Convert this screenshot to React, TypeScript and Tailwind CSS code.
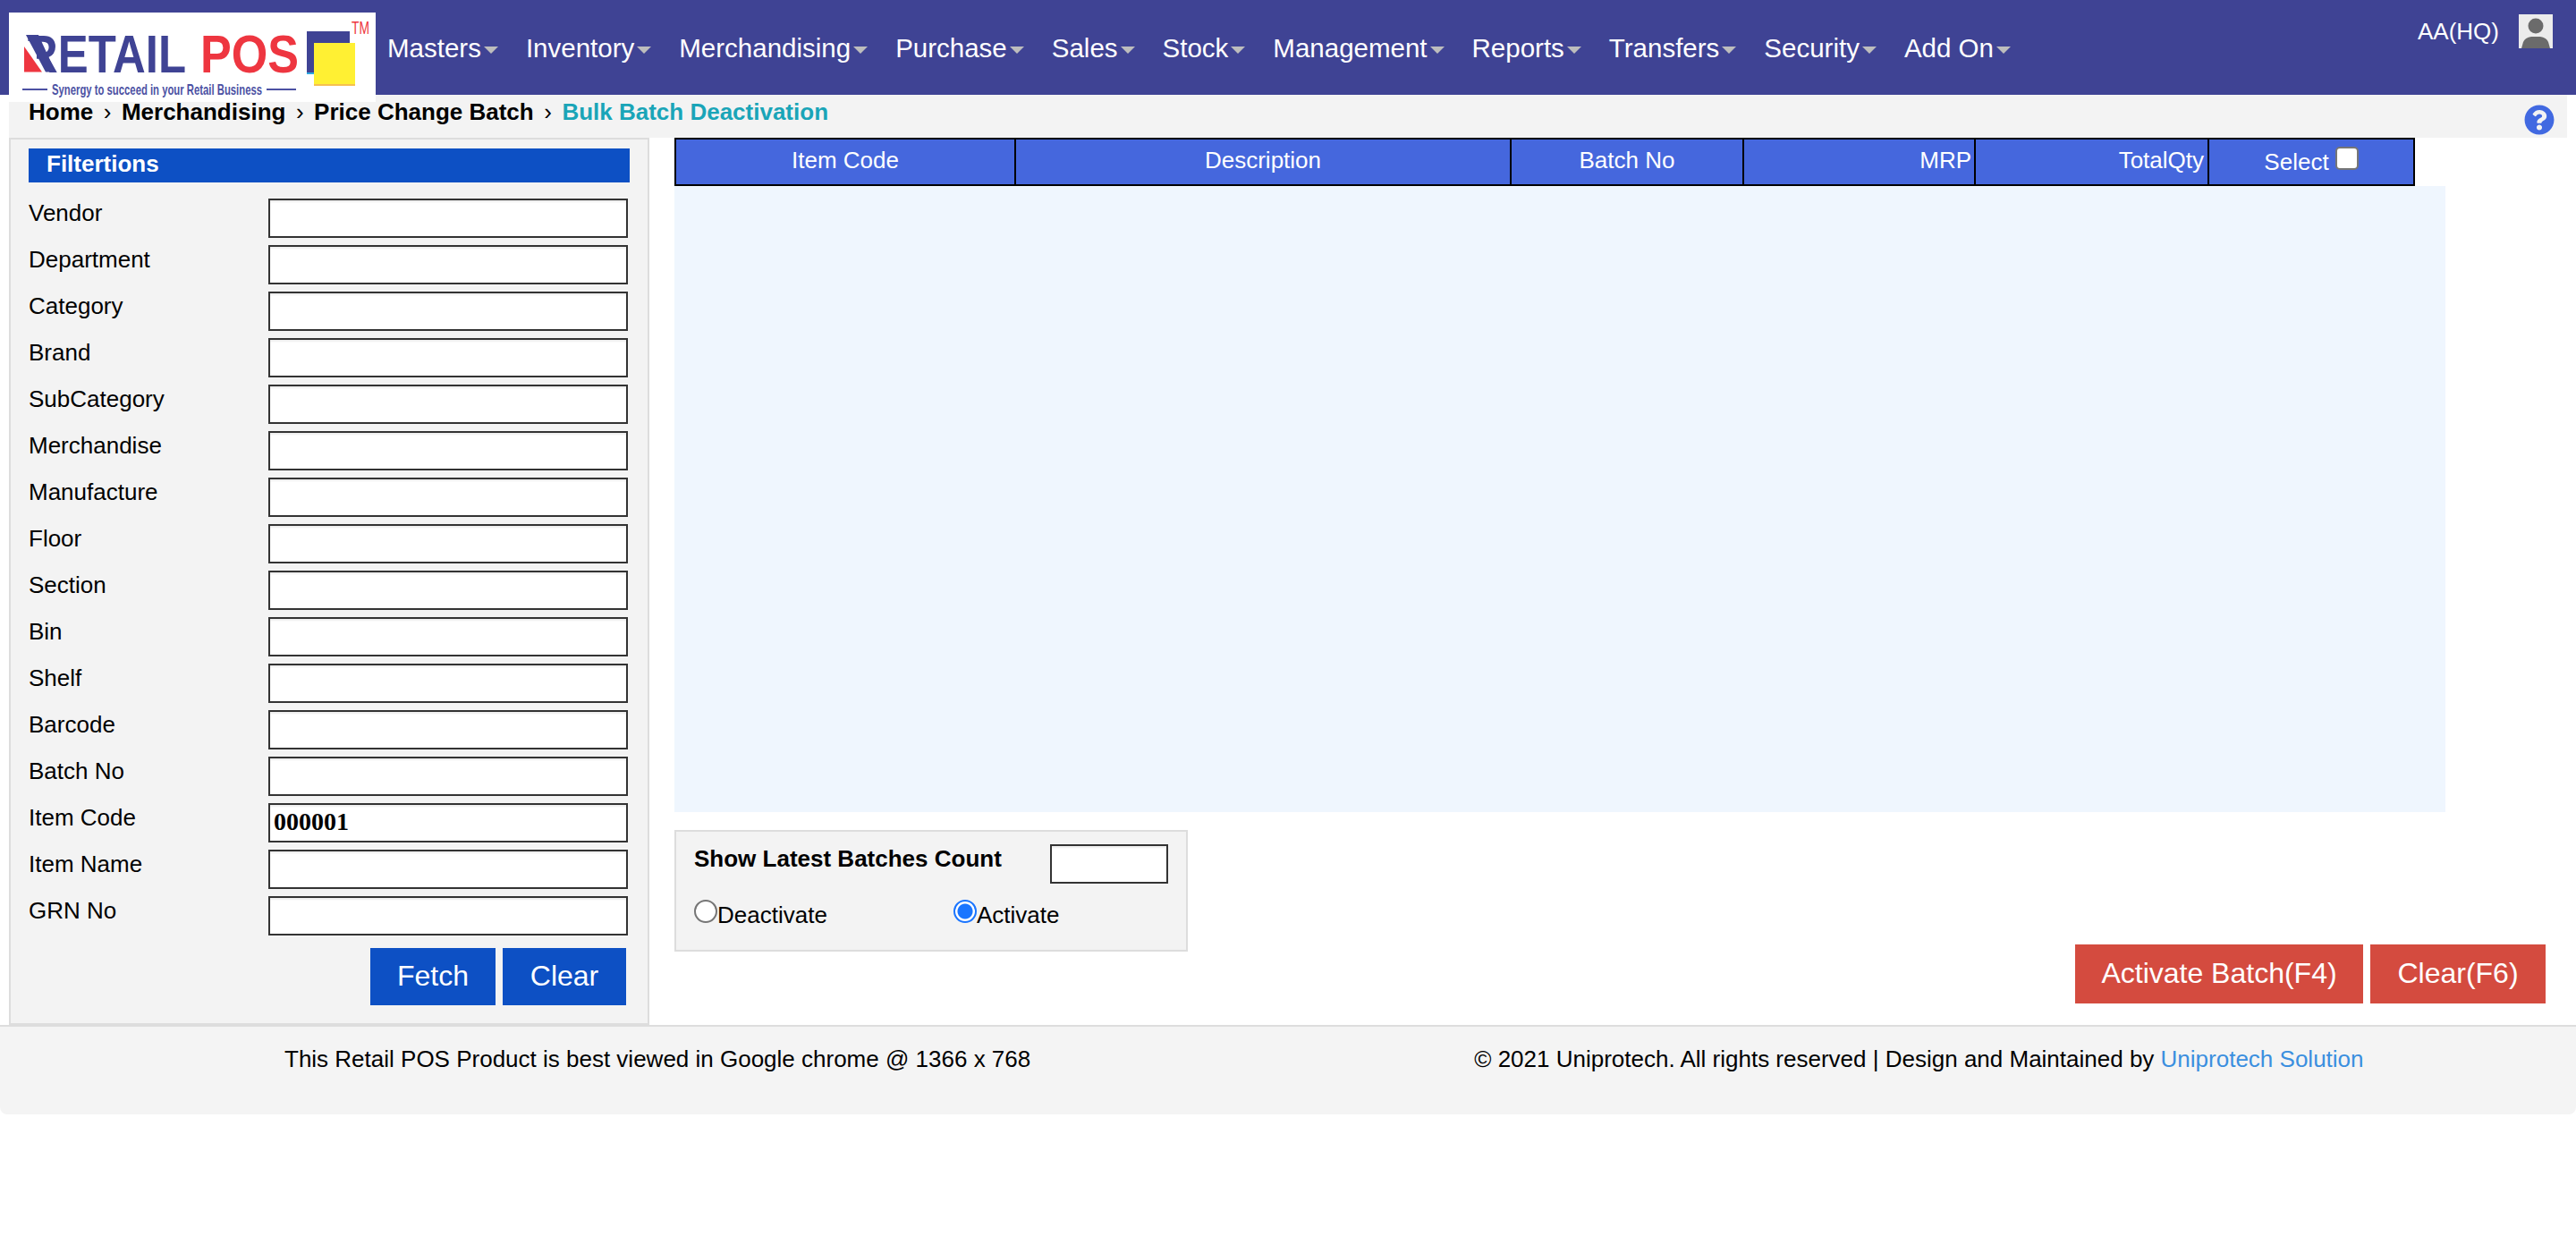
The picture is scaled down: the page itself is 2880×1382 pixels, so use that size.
import { FaQuestionCircle } from "react-icons/fa";

const menus = [
  "Masters",
  "Inventory",
  "Merchandising",
  "Purchase",
  "Sales",
  "Stock",
  "Management",
  "Reports",
  "Transfers",
  "Security",
  "Add On",
];

const filtros = [
  "Vendor",
  "Department",
  "Category",
  "Brand",
  "SubCategory",
  "Merchandise",
  "Manufacture",
  "Floor",
  "Section",
  "Bin",
  "Shelf",
  "Barcode",
  "Batch No",
  "Item Code",
  "Item Name",
  "GRN No",
];

const inputClass =
  "h-[44px] w-full border-2 border-[#333] bg-white px-[4px] shadow-[inset_0_2px_2px_rgba(0,0,0,0.07)] outline-none";

const radioClass =
  "m-0 h-[26px] w-[26px] appearance-none rounded-full border-2 border-[#767676] bg-white checked:border-[#1a75ff] checked:bg-[radial-gradient(circle,#1a75ff_0,#1a75ff_8px,#ffffff_9px)]";

function Logo() {
  return (
    <svg width="410" height="100" viewBox="0 0 410 100" className="relative z-10 mt-[14px] ml-[10px] shrink-0 bg-white">
      <text
        x="18"
        y="67"
        textLength="180"
        lengthAdjust="spacingAndGlyphs"
        fontFamily="Liberation Sans"
        fontWeight="700"
        fontSize="59"
        fill="#3f4394"
      >
        RETAIL
      </text>
      {/* the R of the logo has no stem: a blue slant and a red wedge instead */}
      <rect x="16" y="32" width="15" height="36" fill="#ffffff" />
      <polygon points="19,25 33,25 52,66.5 41,66.5" fill="#3f4394" />
      <polygon points="17,38 37,66.5 17,66.5" fill="#ee3640" />
      <text
        x="214"
        y="67"
        textLength="110"
        lengthAdjust="spacingAndGlyphs"
        fontFamily="Liberation Sans"
        fontWeight="700"
        fontSize="59"
        fill="#ee3640"
      >
        POS
      </text>
      <rect x="333" y="21" width="48" height="48" fill="#3f4394" />
      <rect x="333" y="67" width="8" height="2" fill="#2aa7e0" />
      <rect x="341" y="34" width="46" height="48" fill="#fff033" />
      <rect x="341" y="80" width="46" height="2" fill="#f6c050" />
      <text
        x="383"
        y="24"
        textLength="20"
        lengthAdjust="spacingAndGlyphs"
        fontFamily="Liberation Sans"
        fontSize="20"
        fill="#ee3640"
      >
        TM
      </text>
      <rect x="15" y="85" width="28" height="2" fill="#4c51a3" />
      <rect x="288" y="85" width="33" height="2" fill="#4c51a3" />
      <text
        x="48"
        y="92"
        textLength="235"
        lengthAdjust="spacingAndGlyphs"
        fontFamily="Liberation Sans"
        fontWeight="700"
        fontSize="17"
        fill="#4c51a3"
      >
        Synergy to succeed in your Retail Business
      </text>
    </svg>
  );
}

function Header() {
  return (
    <header className="flex h-[106px] items-start bg-[#3f4394] text-white">
      <Logo />
      <nav className="ml-[13px] flex h-[106px] items-center gap-[31px] pt-[2px] text-[29.5px]">
        {menus.map((m) => (
          <div key={m} className="flex items-center gap-[3px]">
            <span>{m}</span>
            <span className="mt-[4px] h-0 w-0 border-x-[8px] border-t-[8px] border-x-transparent border-t-[#bdbdbd]" />
          </div>
        ))}
      </nav>
      <div className="ml-auto mt-[16px] mr-[26px] flex items-start gap-[22px]">
        <span className="text-[26px] leading-[38px]">AA(HQ)</span>
        <div className="h-[38px] w-[38px] overflow-hidden bg-[#ececec]">
          <svg width="38" height="38" viewBox="0 0 38 38" className="blur-[0.7px]">
            <circle cx="19" cy="13" r="8.5" fill="#6b6b6b" />
            <path d="M3 38 L5 31 Q7 26 14 25 L24 25 Q31 26 33 31 L35 38 Z" fill="#6b6b6b" />
          </svg>
        </div>
      </div>
    </header>
  );
}

function Breadcrumb() {
  const Sep = () => <span className="mx-[11.5px] font-normal">›</span>;
  return (
    <div className="ml-[10px] flex h-[48px] w-[2860px] items-center bg-[#f3f3f3] pl-[22px] pr-[14px]">
      <div className="-mt-[10px] flex items-center text-[26px] font-bold text-black">
        <span>Home</span>
        <Sep />
        <span>Merchandising</span>
        <Sep />
        <span>Price Change Batch</span>
        <Sep />
        <span className="text-[#1aa5b8]">Bulk Batch Deactivation</span>
      </div>
      <FaQuestionCircle className="ml-auto mt-[8px] text-[#4169e1]" size={34} />
    </div>
  );
}

function Filtros() {
  return (
    <aside className="ml-[10px] h-[992px] w-[716px] shrink-0 border-2 border-[#ddd] bg-[#f3f3f3] px-[20px] pt-[10px]">
      <div className="mb-[18px] h-[38px] w-[672px] bg-[#0d50c4] pl-[20px] text-[26px] font-bold leading-[35px] text-white">
        Filtertions
      </div>
      <div className="grid grid-cols-[268px_402px] gap-y-[8px]">
        {filtros.map((f) => (
          <div key={f} className="contents">
            <label className="text-[26px] leading-[33px] text-black">{f}</label>
            {f === "Item Code" ? (
              <input
                readOnly
                value="000001"
                className={`${inputClass} pb-[2px] font-['Liberation_Serif'] text-[28px] font-bold text-black`}
              />
            ) : (
              <input className={inputClass} />
            )}
          </div>
        ))}
      </div>
      <div className="mt-[14px] flex justify-end gap-[8px] pr-[4px]">
        <button className="h-[64px] w-[140px] bg-[#0d50c4] pb-[3px] text-[32px] text-white">Fetch</button>
        <button className="h-[64px] w-[138px] bg-[#0d50c4] pb-[3px] text-[32px] text-white">Clear</button>
      </div>
    </aside>
  );
}

function Tabla() {
  return (
    <div className="w-[1980px]">
      <div className="grid h-[54px] w-[1946px] grid-cols-[380px_554px_260px_259px_261px_228px] border-2 border-black bg-[#4567dd] text-[26px] text-white">
        <div className="flex items-center justify-center border-r-2 border-black pb-[4px]">Item Code</div>
        <div className="flex items-center justify-center border-r-2 border-black pb-[4px]">Description</div>
        <div className="flex items-center justify-center border-r-2 border-black pb-[4px]">Batch No</div>
        <div className="flex items-center justify-end border-r-2 border-black pb-[4px] pr-[3px]">MRP</div>
        <div className="flex items-center justify-end border-r-2 border-black pb-[4px] pr-[4px]">TotalQty</div>
        <div className="flex items-center justify-center gap-[7px]">
          <span>Select</span>
          <input
            type="checkbox"
            className="mb-[8px] h-[26px] w-[26px] appearance-none rounded-[5px] border-2 border-[#767676] bg-white"
          />
        </div>
      </div>
      <div className="h-[700px] bg-[#eff6fe]" />
    </div>
  );
}

export default function App() {
  return (
    <div className="font-['Liberation_Sans',Arial,sans-serif]">
      <Header />
      <Breadcrumb />
      <main className="flex h-[992px]">
        <Filtros />
        <div className="ml-[28px] w-[2092px]">
          <Tabla />
          <div className="mt-[20px] flex items-start justify-between">
            <div className="h-[136px] w-[574px] border-2 border-[#ddd] bg-[#f3f3f3] pl-[20px] pr-[20px] pt-[14px] text-[26px] text-black">
              <div className="flex items-start justify-between">
                <span className="font-bold leading-[32px]">Show Latest Batches Count</span>
                <input className="h-[44px] w-[132px] border-2 border-[#333] bg-white shadow-[inset_0_2px_2px_rgba(0,0,0,0.07)] outline-none" />
              </div>
              <div className="mt-[18px] flex">
                <label className="flex w-[290px] items-start">
                  <input type="radio" name="modo" className={radioClass} />
                  <span className="mt-[2px] leading-[30px]">Deactivate</span>
                </label>
                <label className="flex items-start">
                  <input type="radio" name="modo" defaultChecked className={radioClass} />
                  <span className="mt-[2px] leading-[30px]">Activate</span>
                </label>
              </div>
            </div>
            <div className="mt-[128px] flex gap-[8px]">
              <button className="h-[66px] w-[322px] bg-[#d44b3f] pb-[3px] text-[32px] text-white">Activate Batch(F4)</button>
              <button className="h-[66px] w-[196px] bg-[#d44b3f] pb-[3px] text-[32px] text-white">Clear(F6)</button>
            </div>
          </div>
        </div>
      </main>
      <footer className="flex h-[100px] rounded-b-[8px] border-t-2 border-[#ddd] bg-[#f4f4f4] pt-[19px] text-[26px] leading-[34px] text-black">
        <span className="ml-[318px]">This Retail POS Product is best viewed in Google chrome @ 1366 x 768</span>
        <span className="ml-[496px]">
          © 2021 Uniprotech. All rights reserved | Design and Maintained by{" "}
          <span className="text-[#3b8fdf]">Uniprotech Solution</span>
        </span>
      </footer>
    </div>
  );
}
